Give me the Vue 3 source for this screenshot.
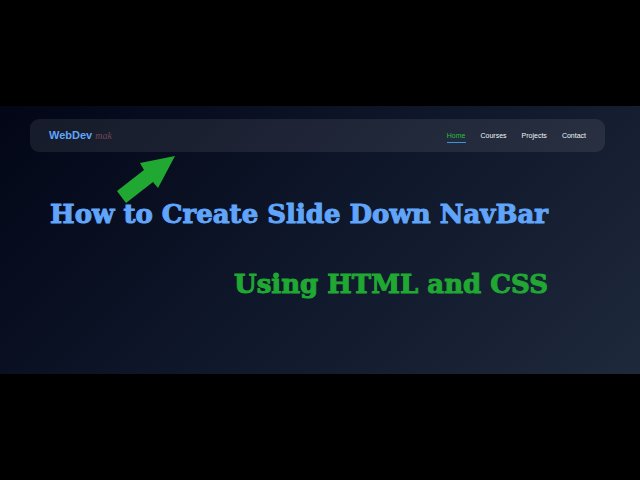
<script setup>
import { ref } from 'vue'

const active = ref('Home')
const links = ['Home', 'Courses', 'Projects', 'Contact']
</script>

<template>
    <main class="page">
        <div class="stage">
            <header class="navbar">
                <a href="#" class="logo">WebDev <span class="logo-tag">mak</span></a>
                <nav class="links">
                    <a
                        v-for="link in links"
                        :key="link"
                        :href="'#' + link.toLowerCase()"
                        class="link"
                        :class="{ active: link === active }"
                        @click="active = link"
                    >{{ link }}</a>
                </nav>
            </header>
            <svg class="arrow" viewBox="0 0 58 47" aria-hidden="true">
                <path d="M58 0 L23 7 L27 14 L0 35 L9 47 L36 26 L41 32 Z" fill="#20a833" />
            </svg>
            <section class="titles">
                <h1 class="title">How to Create Slide Down NavBar</h1>
                <h2 class="title subtitle">Using HTML and CSS</h2>
            </section>
        </div>
    </main>
</template>

<style>
body {
    margin: 0;
    background: #000;
}
</style>

<style scoped>
.page {
    min-height: 100vh;
    display: flex;
    flex-direction: column;
    justify-content: center;
    font-family: "Liberation Sans", Arial, sans-serif;
}

.stage {
    position: relative;
    padding: 13px 35px 74px 30px;
    background: linear-gradient(135deg, #020617, #0f172a 50%, #1e293b);
}

.navbar {
    display: flex;
    align-items: center;
    justify-content: space-between;
    padding: 8px 19px;
    border-radius: 9px;
    background: rgba(255, 255, 255, 0.08);
}

.logo {
    color: #60a5fa;
    font-size: 11px;
    line-height: 17px;
    font-weight: bold;
    text-decoration: none;
}

.logo-tag {
    color: #70485a;
    font-family: "Liberation Serif", cursive;
    font-size: 10px;
    font-style: italic;
    font-weight: normal;
}

.links {
    display: flex;
    gap: 15px;
}

.link {
    padding-top: 2px;
    color: #f1f5f9;
    font-size: 7px;
    line-height: 12px;
    text-decoration: none;
    border-bottom: 1px solid transparent;
}

.link.active {
    color: #22c03c;
    border-bottom-color: #3b93dd;
}

.arrow {
    position: absolute;
    top: 50px;
    left: 117px;
    width: 58px;
    height: 47px;
}

.titles {
    display: flex;
    flex-direction: column;
    gap: 38px;
    padding-top: 46px;
    padding-right: 57px;
    text-align: right;
}

.title {
    position: relative;
    margin: 0;
    color: #60a5fa;
    font-family: "DejaVu Serif", serif;
    font-size: 26px;
    line-height: 32px;
    font-weight: bold;
    white-space: nowrap;
    -webkit-text-stroke: 1px currentColor;
}

.subtitle {
    color: #20a833;
}
</style>
